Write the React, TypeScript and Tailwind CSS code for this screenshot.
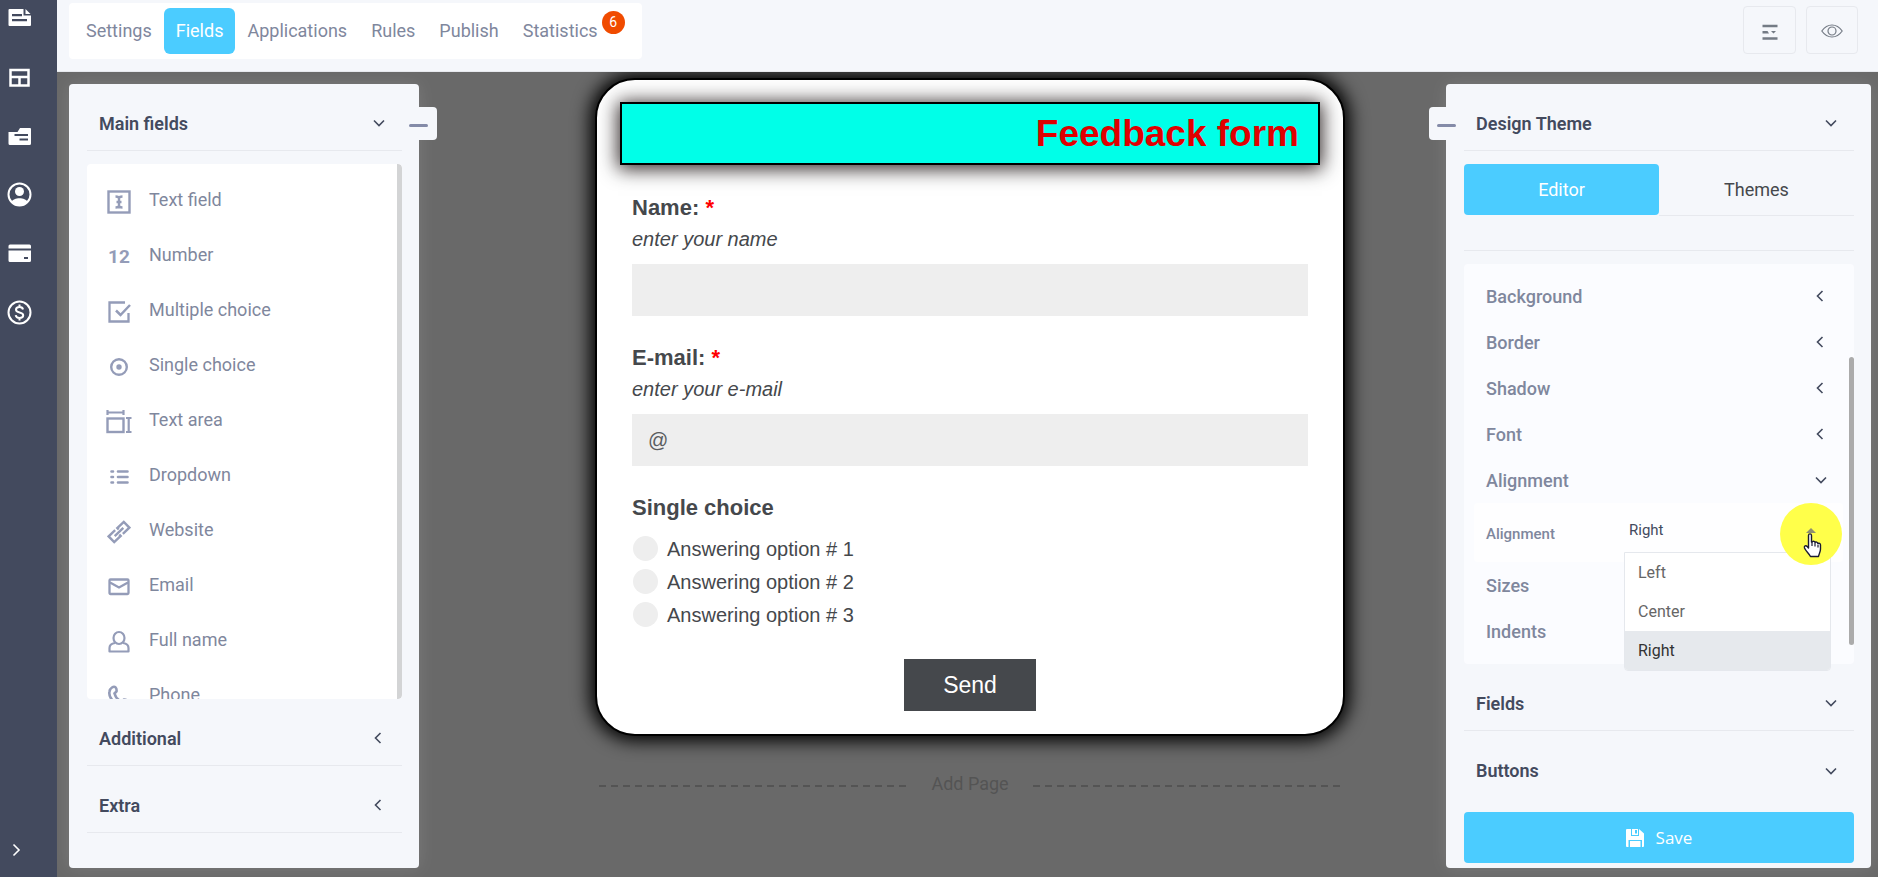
import { useState } from "react";
import type { ReactNode } from "react";

const tabs = ["Settings", "Fields", "Applications", "Rules", "Publish", "Statistics"];

function Svg({ size = 24, children }: { size?: number; children: ReactNode }) {
  return (
    <svg
      width={size}
      height={size}
      viewBox={`0 0 ${size} ${size}`}
      fill="none"
      stroke="currentColor"
      strokeWidth="2"
      className="shrink-0"
      aria-hidden="true"
    >
      {children}
    </svg>
  );
}

function Chevron({ dir }: { dir: "down" | "left" | "right" }) {
  const paths = {
    down: "M3 5.5 L8 10.5 L13 5.5",
    left: "M9.5 3 L4.5 8 L9.5 13",
    right: "M6.5 2.5 L12 8 L6.5 13.5",
  };
  return (
    <svg width="16" height="16" viewBox="0 0 16 16" fill="none" stroke="currentColor" strokeWidth="1.6" className="shrink-0" aria-hidden="true">
      <path d={paths[dir]} />
    </svg>
  );
}

const menu = [
  {
    name: "Forms",
    icon: (
      <Svg size={25}>
        <path fill="currentColor" stroke="none" fillRule="evenodd" d="M2.500 4H16.500v6.500H24V20a1 1 0 0 1-1 1H2.500a1 1 0 0 1-1-1V5a1 1 0 0 1 1-1zM5 9v2.200h10V9zM5 14v2.200h15V14z" />
        <path fill="currentColor" stroke="none" d="M18.500 4l5 5h-5z" />
      </Svg>
    ),
  },
  {
    name: "Templates",
    icon: (
      <Svg size={25}>
        <rect x="3.500" y="6" width="18" height="15.500" strokeWidth="2.500" />
        <path d="M3 13h19M12.500 13v9" strokeWidth="2.500" />
      </Svg>
    ),
  },
  {
    name: "Folders",
    icon: (
      <Svg size={25}>
        <path fill="currentColor" stroke="none" fillRule="evenodd" d="M1.500 9h9l2.500-4h10a1 1 0 0 1 1 1V20.500a1.500 1.500 0 0 1-1.500 1.500H3a1.500 1.500 0 0 1-1.500-1.500zM7.500 11v2H21v-2zM12.500 15.500v2H21v-2z" />
      </Svg>
    ),
  },
  {
    name: "Account",
    icon: (
      <Svg size={25}>
        <circle cx="12.500" cy="12.500" r="11" />
        <circle cx="12.500" cy="9.500" r="4.500" fill="currentColor" stroke="none" />
        <path d="M4.500 20c2-5 14-5 16 0a11 11 0 0 1-16 0z" fill="currentColor" stroke="none" />
      </Svg>
    ),
  },
  {
    name: "Payments",
    icon: (
      <Svg size={25}>
        <path fill="currentColor" stroke="none" fillRule="evenodd" d="M3 3.500h19.500a1.500 1.500 0 0 1 1.500 1.500v2.500H1.500V5A1.500 1.500 0 0 1 3 3.500zM1.500 9.500H24V19.500a1.500 1.500 0 0 1-1.500 1.500H3a1.500 1.500 0 0 1-1.500-1.500zM17 16v2h4v-2z" />
      </Svg>
    ),
  },
  {
    name: "Billing",
    icon: (
      <Svg size={25}>
        <circle cx="12.500" cy="12.500" r="11" />
        <path d="M16 9.500c-.3-1.700-1.600-2.500-3.500-2.500-2 0-3.500.9-3.500 2.700 0 3.700 7.200 1.700 7.200 5.500 0 1.800-1.600 2.800-3.700 2.800-2.200 0-3.500-1-3.800-2.800M12.500 4.500v3M12.500 17.500v3" />
      </Svg>
    ),
  },
];

const mainFields = [
  {
    name: "Text field",
    icon: (
      <Svg>
        <rect x="1.500" y="1.500" width="21" height="21" strokeWidth="2.400" />
        <path d="M8.500 6.500c2 0 3.500.5 3.500 2v7c0 1.500-1.500 2-3.500 2M15.500 6.500c-2 0-3.500.5-3.500 2v7c0 1.500 1.500 2 3.500 2M9.500 12h5" strokeWidth="2.400" />
      </Svg>
    ),
  },
  { name: "Number", icon: <span className="w-6 text-[19px] leading-6 font-bold">12</span> },
  {
    name: "Multiple choice",
    icon: (
      <Svg>
        <path d="M18 2.500H2.500v19h19V13" strokeWidth="2.300" />
        <path d="M9 10.500l4.500 4.500L23 5" strokeWidth="2.500" />
      </Svg>
    ),
  },
  {
    name: "Single choice",
    icon: (
      <Svg>
        <circle cx="12" cy="12" r="7.800" strokeWidth="2.400" />
        <circle cx="12" cy="12" r="2.700" fill="currentColor" stroke="none" />
      </Svg>
    ),
  },
  {
    name: "Text area",
    icon: (
      <Svg size={26}>
        <path d="M1.500 1v5M17.500 1v5M1 3.500h17M20 9h5.500M20 23h5.500M22.700 8v15" strokeWidth="2.200" />
        <rect x="1.500" y="9.500" width="16" height="13.500" strokeWidth="2.400" />
      </Svg>
    ),
  },
  {
    name: "Dropdown",
    icon: (
      <Svg>
        <path d="M4.500 6.500h1.500M4.500 12h1.500M4.500 17.500h1.500M11 6.500h9.500M11 12h9.500M11 17.500h9.500" strokeWidth="2.600" strokeLinecap="round" />
      </Svg>
    ),
  },
  {
    name: "Website",
    icon: (
      <Svg>
        <g transform="rotate(-44 12 12)" strokeWidth="2.400">
          <path d="M10.500 8H1.500v8h9v-2M13.500 16h9V8h-9v2M6 12h12" />
        </g>
      </Svg>
    ),
  },
  {
    name: "Email",
    icon: (
      <Svg>
        <rect x="2.500" y="4.500" width="19" height="14.500" rx="1" strokeWidth="2.300" />
        <path d="M3 7.500l9 5L21 7.500" strokeWidth="2.300" />
      </Svg>
    ),
  },
  {
    name: "Full name",
    icon: (
      <Svg>
        <ellipse cx="12" cy="8" rx="5.500" ry="6" strokeWidth="2.200" />
        <path d="M8 13c-3 .5-5.500 2.500-5.500 5v3.500h19V18c0-2.500-2.500-4.500-5.500-5" strokeWidth="2.200" strokeLinejoin="round" />
      </Svg>
    ),
  },
  {
    name: "Phone",
    icon: (
      <Svg>
        <path d="M5 2.500c3-2 5 .5 4.500 4L7.500 8.500c1 3.500 3.500 6.500 7 8l2.500-2c3 0 5 2 4 5-9 5-20-6-18.500-13C2.800 4.500 3.500 3.500 5 2.500z" strokeWidth="2.600" />
      </Svg>
    ),
  },
];

const options = ["Left", "Center", "Right"];

function SectionHeader({ title, dir, line = true }: { title: string; dir: "down" | "left"; line?: boolean }) {
  return (
    <button
      className={
        line
          ? "flex h-[67px] w-full shrink-0 items-center justify-between border-b border-[#e7e9ee] pt-3 pr-[15px] pl-3 text-[18px] font-semibold text-[#434a5e]"
          : "flex h-[67px] w-full shrink-0 items-center justify-between pt-3 pr-[15px] pl-3 text-[18px] font-semibold text-[#434a5e]"
      }
    >
      {title}
      <Chevron dir={dir} />
    </button>
  );
}

function DesignRow({ title, dir = "left" }: { title: string; dir?: "down" | "left" }) {
  return (
    <button className="flex h-[46px] w-full items-center justify-between pr-[25px] pl-[22px] text-[18px] font-medium text-[#7f879d]">
      {title}
      <span className="text-[#434a5e]">
        <Chevron dir={dir} />
      </span>
    </button>
  );
}

function Sidebar() {
  return (
    <aside className="flex w-[57px] shrink-0 flex-col justify-between bg-[#434a5e] pt-[5px] pb-[19px] pl-[7px] text-white">
      <nav className="flex flex-col gap-[34px]">
        {menu.map((item) => (
          <a key={item.name} href="#" aria-label={item.name}>
            <span className="block h-[25px]">{item.icon}</span>
          </a>
        ))}
      </nav>
      <button aria-label="Expand menu" className="w-4">
        <Chevron dir="right" />
      </button>
    </aside>
  );
}

function TopBar() {
  const [active, setActive] = useState("Fields");

  return (
    <header className="z-20 flex h-[72px] shrink-0 items-start justify-between border-b border-[#e7e9ee] bg-[#f5f7fb] pt-[3px] pr-5 pl-3">
      <nav className="flex h-14 items-center rounded bg-white pr-8 pl-[5px]">
        {tabs.map((tab) => (
          <button
            key={tab}
            onClick={() => setActive(tab)}
            className={
              tab === active
                ? "relative h-[46px] rounded-md bg-[#4bccff] px-3 pb-px text-[18px] text-white"
                : "relative h-[46px] rounded-md px-3 pb-px text-[18px] text-[#7f879d]"
            }
          >
            {tab}
            {tab === "Statistics" && (
              <span className="absolute top-[3px] -right-[15px] size-[23px] rounded-full bg-[#f04b00] text-center text-[14px] leading-[23px] text-white">
                6
              </span>
            )}
          </button>
        ))}
      </nav>
      <div className="flex gap-[10px] pt-[3px]">
        <button aria-label="Layout" className="flex h-12 w-[53px] items-center justify-center rounded border border-[#e7e9ee] pt-1 text-[#747b85]">
          <Svg size={16}>
            <path d="M0.500 2h15M0.500 14.500h15" strokeWidth="2.500" />
            <path d="M0.500 7h5l1.500 2.500h-6.500zM9 7h5l-2.500 2.500z" fill="currentColor" stroke="none" />
          </Svg>
        </button>
        <button aria-label="Preview" className="flex h-12 w-[52px] items-center justify-center rounded border border-[#e7e9ee] pt-[2px] text-[#747b85]">
          <Svg size={22}>
            <path d="M0.800 11C6.500 3 15.500 3 21.200 11C15.500 19 6.500 19 0.800 11z" strokeWidth="1.200" />
            <circle cx="11" cy="11" r="4" strokeWidth="1.200" />
          </Svg>
        </button>
      </div>
    </header>
  );
}

function FieldsPanel() {
  return (
    <section className="relative flex w-[350px] shrink-0 flex-col rounded bg-[#f5f7fb] pr-[17px] pb-[35px] pl-[18px] shadow-[0_0_18px_rgba(255,255,255,0.12)]">
      <button
        aria-label="Collapse fields"
        className="absolute top-[23px] -right-[18px] flex h-[33px] w-9 items-center justify-center rounded bg-[#f5f7fb] pt-1 pr-[2px]"
      >
        <span className="h-[3px] w-[19px] rounded-full bg-[#848ba8]" />
      </button>
      <SectionHeader title="Main fields" dir="down" />
      <div className="mt-[13px] flex min-h-0 flex-1 overflow-hidden rounded bg-white">
        <ul className="flex-1 pt-[10px]">
          {mainFields.map((field) => (
            <li key={field.name}>
              <button className="flex h-[55px] w-full items-center pl-4 text-[18px] text-[#7f879d]">
                <span className="flex w-8 justify-center text-[#949cb8]">{field.icon}</span>
                <span className="pb-[5px] pl-[14px]">{field.name}</span>
              </button>
            </li>
          ))}
        </ul>
        <div className="w-[5px] rounded-r bg-[#d3d4d5]" />
      </div>
      <SectionHeader title="Additional" dir="left" />
      <SectionHeader title="Extra" dir="left" />
    </section>
  );
}

function FormField({ id, label, hint, value }: { id: string; label: string; hint: string; value?: string }) {
  return (
    <div className="flex flex-col">
      <label htmlFor={id} className="text-[22px] leading-8 font-bold">
        {label} <span className="text-[#ff0000]">*</span>
      </label>
      <p className="text-[20px] leading-[30px] italic">{hint}</p>
      <input
        id={id}
        type="text"
        defaultValue={value}
        className="mt-[10px] h-[52px] w-full bg-[#eeeeee] px-4 text-[20px] text-[#5a5d60] outline-none"
      />
    </div>
  );
}

function FormPreview() {
  return (
    <main className="flex min-w-0 flex-1 flex-col items-center pl-[75px]">
      <form
        onSubmit={(e) => e.preventDefault()}
        className="-mt-[6px] w-full max-w-[750px] rounded-[40px] border-2 border-black bg-white px-[23px] pt-[22px] pb-[23px] font-['Liberation_Sans',Arial,sans-serif] text-[#45484c] shadow-[0_0_18px_5px_#000]"
      >
        <h1 className="border-2 border-black bg-[#00ffe8] px-[19px] pt-px text-right text-[37px] leading-[58px] font-bold text-[#e00000] shadow-[0_2px_18px_2px_rgba(10,0,0,0.85)]">
          Feedback form
        </h1>
        <div className="flex flex-col gap-[26px] px-3 pt-[27px]">
          <FormField id="name" label="Name:" hint="enter your name" />
          <FormField id="email" label="E-mail:" hint="enter your e-mail" value="@" />
          <fieldset className="pb-[2px]">
            <legend className="mb-2 text-[22px] leading-8 font-bold">Single choice</legend>
            <div className="flex flex-col">
              {[1, 2, 3].map((n) => (
                <label key={n} className="flex h-[33px] items-center gap-[9px] pl-px text-[20px]">
                  <input type="radio" name="choice" className="size-[25px] appearance-none rounded-full bg-[#eeeeee]" />
                  Answering option # {n}
                </label>
              ))}
            </div>
          </fieldset>
          <button type="submit" className="h-[52px] w-[132px] self-center bg-[#45484c] text-[23px] text-white">
            Send
          </button>
        </div>
      </form>
      <button className="mt-[34px] flex w-full max-w-[742px] items-center gap-6 text-[18px] text-[#545454]">
        <span className="mt-1 h-[2px] flex-1 bg-[repeating-linear-gradient(90deg,#545454_0_7px,transparent_7px_12px)]" />
        Add Page
        <span className="mt-1 h-[2px] flex-1 bg-[repeating-linear-gradient(90deg,#545454_0_7px,transparent_7px_12px)]" />
      </button>
    </main>
  );
}

function Pointer() {
  return (
    <svg
      width="62"
      height="62"
      viewBox="0 0 62 62"
      className="pointer-events-none absolute top-0 right-px z-20"
      aria-hidden="true"
    >
      <circle cx="31" cy="31" r="31" fill="#ffff4a" />
      <path d="M26 30l5-5 5 5z" fill="#8f8f70" />
      <path
        d="M28.500 32.500c0-2.200 3-2.200 3 0v6.500l1-.5c1-.6 2.300-.2 2.500 1 1-.8 2.600-.4 2.800.9 1.200-.5 2.700.2 2.700 1.600v4c0 3-1.500 4.500-2 7.500h-8c-1.500-3-4.500-5-6-8.500-.7-2 1.300-3 2.700-1.500l1.300 1.500z"
        fill="#fff"
        stroke="#1b1b33"
        strokeWidth="1.400"
        strokeLinejoin="round"
      />
      <path d="M32 39v4M35 40v3.500M38 41.500v3" stroke="#1b1b33" strokeWidth="1.200" />
    </svg>
  );
}

function DesignPanel() {
  const [align, setAlign] = useState("Right");

  return (
    <section className="relative flex w-[425px] shrink-0 flex-col rounded bg-[#f5f7fb] pr-[17px] pb-[5px] pl-[18px] shadow-[0_0_18px_rgba(255,255,255,0.12)]">
      <button
        aria-label="Collapse design"
        className="absolute top-[23px] -left-[17px] flex h-[33px] w-9 items-center justify-center rounded bg-[#f5f7fb] pt-1 pr-[2px]"
      >
        <span className="h-[3px] w-[19px] rounded-full bg-[#848ba8]" />
      </button>
      <SectionHeader title="Design Theme" dir="down" />
      <div className="mt-[13px] grid grid-cols-2 text-[18px]">
        <button className="h-[51px] rounded bg-[#4bccff] text-white">Editor</button>
        <button className="h-[52px] border-b border-[#e7e9ee] text-[#45484c]">Themes</button>
      </div>
      <div className="h-[35px] shrink-0 border-b border-[#e7e9ee]" />
      <div className="relative mt-[13px] min-h-0 flex-1 rounded bg-[#fbfcff] pt-[9px]">
        <DesignRow title="Background" />
        <DesignRow title="Border" />
        <DesignRow title="Shadow" />
        <DesignRow title="Font" />
        <DesignRow title="Alignment" dir="down" />
        <div className="relative mr-[11px] ml-[10px] flex h-[59px] items-center rounded bg-[#fefeff] pl-3">
          <label htmlFor="alignment" className="w-[138px] pt-1 text-[15px] font-medium text-[#7f879d]">
            Alignment
          </label>
          <select
            id="alignment"
            value={align}
            onChange={(e) => setAlign(e.target.value)}
            className="h-10 w-[207px] appearance-none bg-transparent pb-1 pl-[5px] text-[15px] text-[#434a5e] outline-none"
          >
            {options.map((o) => (
              <option key={o}>{o}</option>
            ))}
          </select>
          <ul className="absolute top-[49px] right-3 z-10 w-[207px] overflow-hidden rounded-b border border-[#e5e8ed] bg-white">
            {options.map((o) => (
              <li
                key={o}
                onClick={() => setAlign(o)}
                className={
                  o === align
                    ? "h-[39px] bg-[#e6e9ed] pl-[13px] text-[16px] leading-[39px] text-[#333333]"
                    : "h-[39px] pl-[13px] text-[16px] leading-[39px] text-[#666666]"
                }
              >
                {o}
              </li>
            ))}
          </ul>
          <Pointer />
        </div>
        <DesignRow title="Sizes" />
        <DesignRow title="Indents" />
        <div className="absolute top-[93px] right-0 h-[288px] w-[5px] rounded-full bg-[#ababab]" />
      </div>
      <SectionHeader title="Fields" dir="down" />
      <SectionHeader title="Buttons" dir="down" line={false} />
      <button className="mt-[14px] flex h-[51px] shrink-0 items-center justify-center gap-3 rounded bg-[#4bccff] pt-px font-['Open_Sans','Noto_Sans',sans-serif] text-[17px] text-white">
        <Svg size={18}>
          <path fill="currentColor" stroke="none" fillRule="evenodd" d="M1 0h4v7h8V0l5 4.500V17a1 1 0 0 1-1 1h-1v-7H2.500v7H1a1 1 0 0 1-1-1V1a1 1 0 0 1 1-1zM6 0h6v6H6zM9 1v3.500h2V1zM4 12h10.500v6H4z" />
        </Svg>
        Save
      </button>
    </section>
  );
}

export default function App() {
  return (
    <div className="flex h-screen overflow-hidden bg-[#696969] font-[Roboto,sans-serif]">
      <Sidebar />
      <div className="flex min-w-0 flex-1 flex-col">
        <TopBar />
        <div className="flex min-h-0 flex-1 pt-3 pr-[7px] pb-[9px] pl-3">
          <FieldsPanel />
          <FormPreview />
          <DesignPanel />
        </div>
      </div>
    </div>
  );
}
